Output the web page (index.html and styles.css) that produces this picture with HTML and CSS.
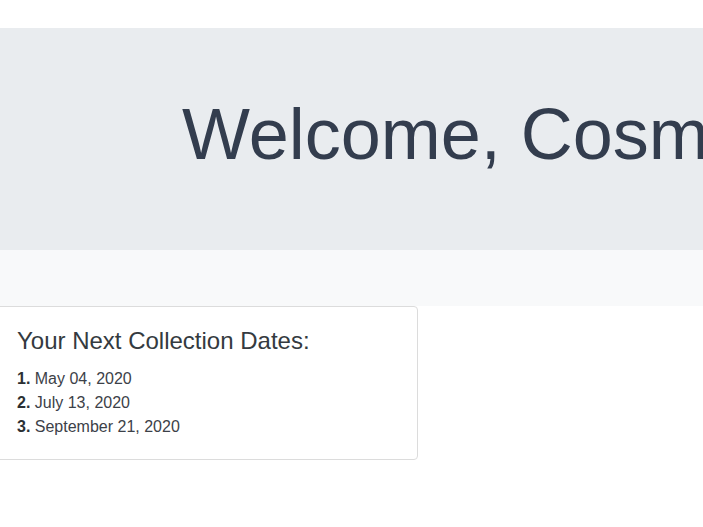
FILE: index.html
```html
<!DOCTYPE html>
<html>
<head>
<meta charset="utf-8">
<link rel="stylesheet" href="styles.css">
</head>
<body>
<div class="topbar"></div>
<header class="hero">
  <h1 class="hero-title">Welcome, Cosmo!</h1>
</header>
<div class="subband"></div>
<section class="card">
  <h4 class="card-title">Your Next Collection Dates:</h4>
  <ol class="dates">
    <li><b>1.</b> May 04, 2020</li>
    <li><b>2.</b> July 13, 2020</li>
    <li><b>3.</b> September 21, 2020</li>
  </ol>
</section>
</body>
</html>
```
FILE: styles.css
```css
html, body {
  margin: 0;
  padding: 0;
  background: #ffffff;
  overflow: hidden;
  font-family: "Liberation Sans", Arial, sans-serif;
  color: #343a40;
}
.topbar {
  height: 28px;
}
.hero {
  background: #e9ecef;
  height: 222px;
  box-sizing: border-box;
  padding: 63px 0 0 182px;
}
.hero-title {
  margin: 0;
  font-size: 72px;
  font-weight: 400;
  line-height: 1.2;
  color: #333d4e;
  white-space: nowrap;
}
.subband {
  background: #f8f9fa;
  height: 56px;
}
.card {
  margin-left: -4px;
  width: 422px;
  box-sizing: border-box;
  border: 1px solid #dcdcdc;
  border-radius: 4px;
  padding: 20px;
  background: #fff;
}
.card-title {
  margin: 0 0 11px 0;
  font-size: 24px;
  font-weight: 400;
  line-height: 1.2;
  color: #343a40;
}
.dates {
  list-style: none;
  margin: 0;
  padding: 0;
  font-size: 16px;
  line-height: 24px;
  color: #3c4148;
}
.dates b {
  color: #2b2f33;
}
```
